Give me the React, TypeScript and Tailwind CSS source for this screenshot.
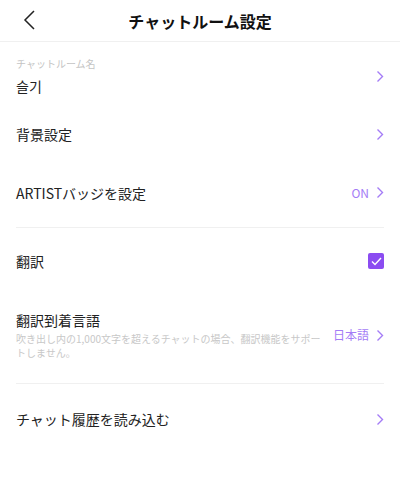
import type { ReactNode } from "react";

const font = {
  fontFamily:
    '"Noto Sans CJK JP", "Noto Sans CJK KR", "Noto Sans", sans-serif',
};

function Chevron() {
  return (
    <svg width="8" height="13" viewBox="0 0 8 13" fill="none" className="shrink-0">
      <path d="M1.5 1.5L6.5 6.5L1.5 11.5" stroke="#a47cf6" strokeWidth="1.4" />
    </svg>
  );
}

function Row({
  title,
  label,
  note,
  value,
  right,
  className = "",
}: {
  title: string;
  label?: string;
  note?: string;
  value?: string;
  right?: ReactNode;
  className?: string;
}) {
  return (
    <div className={`flex items-center justify-between ${className}`}>
      <div className="flex flex-col">
        {label && (
          <span className="mb-[5px] text-[10px] leading-[14px] text-[#c4c4c4]">{label}</span>
        )}
        <span className="text-[14px] leading-[20px] text-[#222]">{title}</span>
        {note && (
          <span className="mt-[2px] w-[310px] text-[10px] leading-[14px] text-[#c8c8c8]">
            {note}
          </span>
        )}
      </div>
      {right ?? (
        <div className="flex items-center gap-[7px]">
          {value && <span className="text-[12px] text-[#a47cf6]">{value}</span>}
          <Chevron />
        </div>
      )}
    </div>
  );
}

export default function App() {
  return (
    <div className="h-[480px] w-[400px] overflow-hidden bg-white" style={font}>
      <header className="relative flex h-[42px] items-center justify-center border-b border-[#f0f0f0]">
        <svg
          width="13"
          height="20"
          viewBox="0 0 13 20"
          fill="none"
          className="absolute left-[23px] top-[10px]"
        >
          <path d="M11 1L2 10L11 19" stroke="#222" strokeWidth="1.5" />
        </svg>
        <h1 className="text-[16px] font-bold text-[#111]">チャットルーム設定</h1>
      </header>

      <div className="px-4">
        <Row className="h-[68px]" label="チャットルーム名" title="슬기" />
        <Row className="h-[48px]" title="背景設定" />
        <Row className="h-[69px]" title="ARTISTバッジを設定" value="ON" />
        <div className="h-px bg-[#f0f0f0]" />
        <Row
          className="h-[66px]"
          title="翻訳"
          right={
            <span className="flex h-4 w-4 items-center justify-center rounded-[2px] bg-[#8b4cf1]">
              <svg width="11" height="9" viewBox="0 0 11 9" fill="none">
                <path d="M1 4.5L4 7.5L10 1" stroke="white" strokeWidth="1.4" />
              </svg>
            </span>
          }
        />
        <Row
          className="h-[89px] pb-[23px] pt-[16px]"
          title="翻訳到着言語"
          note="吹き出し内の1,000文字を超えるチャットの場合、翻訳機能をサポートしません。"
          value="日本語"
        />
        <div className="h-px bg-[#f0f0f0]" />
        <Row className="h-[70px]" title="チャット履歴を読み込む" />
      </div>
    </div>
  );
}
